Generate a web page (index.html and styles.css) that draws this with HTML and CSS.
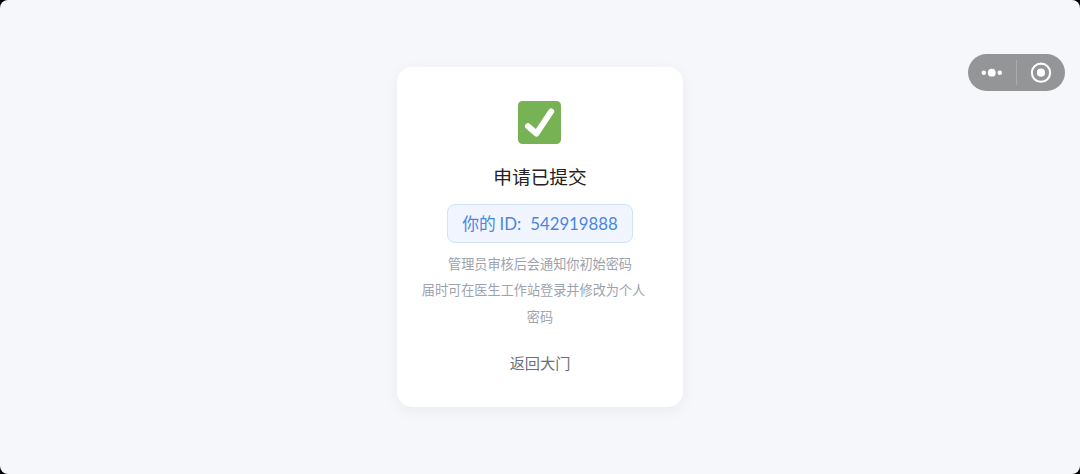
FILE: index.html
```
<!DOCTYPE html>
<html lang="zh-CN">
<head>
    <meta charset="UTF-8">
    <title>申请已提交</title>
    <link rel="stylesheet" href="styles.css">
</head>
<body>
<div class="page">
    <div class="card">
        <svg class="check" viewBox="0 0 43 43">
            <rect width="43" height="43" rx="4.5" fill="#77b255"/>
            <path d="M10 25.2 L18.4 32.6 L33.2 10.4" fill="none" stroke="#fff" stroke-width="6" stroke-linecap="round" stroke-linejoin="round"/>
        </svg>
        <h1 class="title">申请已提交</h1>
        <div class="id-box">你的 <span class="id-label">ID:</span><span class="id-number">542919888</span></div>
        <p class="hint">管理员审核后会通知你初始密码<br><span class="hint-line">届时可在医生工作站登录并修改为个人</span><br>密码</p>
        <button class="back">返回大门</button>
    </div>

    <div class="capsule">
        <svg class="capsule-icon" viewBox="0 0 48 37">
            <circle cx="15.8" cy="18.7" r="2.2"/>
            <circle cx="23.8" cy="18.7" r="3.9"/>
            <circle cx="31.8" cy="18.7" r="2.2"/>
        </svg>
        <span class="divider"></span>
        <svg class="capsule-icon" viewBox="0 0 48 37">
            <circle cx="24" cy="18.7" r="9.1" fill="none" stroke="#fff" stroke-width="2.1"/>
            <circle cx="24" cy="18.7" r="4.1"/>
        </svg>
    </div>
</div>
</body>
</html>
```

FILE: styles.css
```
* {
    box-sizing: border-box;
}
html {
    background: #000;
}
body {
    margin: 0;
    font-family: "Noto Sans CJK SC", sans-serif;
}
.page {
    position: relative;
    display: flex;
    justify-content: center;
    align-items: center;
    height: 474px;
    background: #f5f7fb;
    border-radius: 8px;
}
.card {
    display: flex;
    flex-direction: column;
    align-items: center;
    width: 286px;
    height: 340px;
    padding: 34px 24px 0;
    background: #fff;
    border-radius: 15px;
    box-shadow: 0 4px 15px rgba(0, 0, 0, 0.05);
}
.check {
    width: 43px;
    height: 43px;
    margin-right: 1px;
}
.title {
    margin: 18px 0 0;
    font-size: 18.7px;
    font-weight: 400;
    line-height: 28px;
    color: #222;
}
.id-box {
    height: 39px;
    width: 186px;
    margin-top: 14px;
    border: 1px solid #d0e2fa;
    border-radius: 8px;
    background: #f0f5ff;
    color: #4a86e0;
    font-size: 16.8px;
    line-height: 37px;
    text-align: center;
    white-space: nowrap;
}
.id-label,
.id-number {
    font-family: Lato, "Noto Sans CJK SC", sans-serif;
}
.id-number {
    margin-left: 9px;
}
.hint {
    margin: 8px 0 0;
    font-size: 13.15px;
    line-height: 26.4px;
    text-align: center;
    color: #9ca3af;
}
.hint-line {
    padding-right: 13px;
}
.back {
    margin-top: 17px;
    padding: 0;
    border: none;
    background: none;
    font-family: inherit;
    font-size: 15.2px;
    line-height: 30px;
    color: #6b7075;
    cursor: pointer;
}
.capsule {
    position: absolute;
    top: 54px;
    right: 15px;
    display: flex;
    align-items: center;
    width: 97px;
    height: 37px;
    border-radius: 19px;
    background: #949596;
}
.capsule-icon {
    width: 48px;
    height: 37px;
    fill: #fff;
}
.divider {
    width: 1px;
    height: 25px;
    background: #aaabac;
}
```
